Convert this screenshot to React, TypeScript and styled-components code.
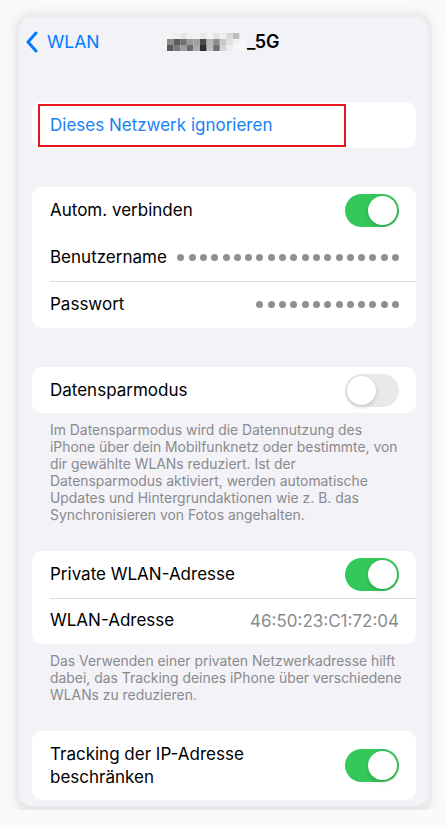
import { createGlobalStyle, styled } from "styled-components";

const GlobalStyle = createGlobalStyle`
  html, body {
    margin: 0;
    padding: 0;
    background: #fafafa;
  }
  body {
    font-family: Inter, "Liberation Sans", Arial, sans-serif;
    -webkit-font-smoothing: antialiased;
  }
`;

// mosaic that hides the network name
const mosaic = [
  ["#f4f4f4", "#f0f0f0", "#e6e6e6", "#eeeeee", "#f2f2f2", "#eaeaea", "#f1f1f1", "#e4e4e4", "#efefef", "#d8d8d8", "#bdbdbd", "#f3f3f3"],
  ["#8a8a8a", "#5c5c5c", "#707070", "#9a9a9a", "#a0a0a0", "#4a4a4a", "#b6b6b6", "#8e8e8e", "#c8c8c8", "#e0e0e0", "#f0f0f0", "#f6f6f6"],
  ["#5a5a5a", "#7a7a7a", "#9c9c9c", "#6c6c6c", "#aaaaaa", "#2e2e2e", "#bcbcbc", "#707070", "#d4d4d4", "#ececec", "#f6f6f6", "#f8f8f8"],
];

const Mosaic = () => (
  <svg width="80" height="18" viewBox="0 0 80 18">
    {mosaic.map((row, r) =>
      row.map((c, i) => (
        <rect key={`${r}-${i}`} x={i * 6.6} y={r * 6} width="6.6" height="6" fill={c} />
      ))
    )}
  </svg>
);

const Chevron = () => (
  <svg width="14" height="22" viewBox="0 0 14 22">
    <path
      d="M11 2 L3 11 L11 20"
      fill="none"
      stroke="#007aff"
      strokeWidth="3"
      strokeLinecap="round"
      strokeLinejoin="round"
    />
  </svg>
);

const Dots = ({ count }: { count: number }) => (
  <DotRow>
    {[...Array(count)].map((_, i) => (
      <Dot key={i} />
    ))}
  </DotRow>
);

function App() {
  return (
    <>
      <GlobalStyle />
      <Frame>
        <NavBar>
          <BackButton>
            <Chevron />
            <span>WLAN</span>
          </BackButton>
          <NavTitle>
            <Mosaic />
            <span>_5G</span>
          </NavTitle>
        </NavBar>

        <Content>
          <Card $mt={37}>
            <Row>
              <ActionLabel>Dieses Netzwerk ignorieren</ActionLabel>
            </Row>
            <Highlight />
          </Card>

          <Card $mt={39}>
            <Row $h={47}>
              <Label>Autom. verbinden</Label>
              <Toggle $on />
            </Row>
            <Row $h={47}>
              <Label>Benutzername</Label>
              <Dots count={20} />
            </Row>
            <Row $h={47} $divider>
              <Label>Passwort</Label>
              <Dots count={13} />
            </Row>
          </Card>

          <Card $mt={39}>
            <Row>
              <Label>Datensparmodus</Label>
              <Toggle />
            </Row>
          </Card>
          <Footnote>
            Im Datensparmodus wird die Datennutzung des
            <br />
            iPhone über dein Mobilfunknetz oder bestimmte, von
            <br />
            dir gewählte WLANs reduziert. Ist der
            <br />
            Datensparmodus aktiviert, werden automatische
            <br />
            Updates und Hintergrundaktionen wie z. B. das
            <br />
            Synchronisieren von Fotos angehalten.
          </Footnote>

          <Card $mt={27}>
            <Row $h={46.5}>
              <Label>Private WLAN-Adresse</Label>
              <Toggle $on />
            </Row>
            <Row $h={46.5} $divider>
              <Label>WLAN-Adresse</Label>
              <Value>46:50:23:C1:72:04</Value>
            </Row>
          </Card>
          <Footnote>
            Das Verwenden einer privaten Netzwerkadresse hilft
            <br />
            dabei, das Tracking deines iPhone über verschiedene
            <br />
            WLANs zu reduzieren.
          </Footnote>

          <Card $mt={27}>
            <Row $h={69}>
              <Label>
                Tracking der IP-Adresse
                <br />
                beschränken
              </Label>
              <Toggle $on />
            </Row>
          </Card>
        </Content>
      </Frame>
    </>
  );
}

export default App;

const Frame = styled.div`
  margin: 17px 19px 0 19px;
  height: 793px;
  border-radius: 14px;
  background: #f2f2f7;
  overflow: hidden;
  box-shadow: 0 0 0 4px #ececec, 0 0 8px 6px #ededed;
  border-bottom: 4px solid #e7e7eb;
  box-sizing: border-box;
`;

const NavBar = styled.div`
  position: relative;
  display: flex;
  align-items: center;
  height: 48px;
  padding-left: 6px;
  box-sizing: border-box;
`;

const BackButton = styled.div`
  display: flex;
  align-items: center;
  gap: 8px;
  color: #007aff;
  font-size: 17.5px;
  padding-top: 1px;
`;

const NavTitle = styled.div`
  position: absolute;
  left: 148px;
  top: 14px;
  display: flex;
  align-items: center;
  font-size: 18px;
  font-weight: 600;
  color: #000;
`;

const Content = styled.div`
  display: flex;
  flex-direction: column;
  padding: 0 12px 0 13px;
`;

const Card = styled.div<{ $mt: number }>`
  position: relative;
  margin-top: ${({ $mt }) => $mt}px;
  background: #fff;
  border-radius: 10px;
`;

const Row = styled.div<{ $h?: number; $divider?: boolean }>`
  position: relative;
  display: flex;
  align-items: center;
  justify-content: space-between;
  height: ${({ $h }) => $h ?? 46}px;
  padding: 0 17px 0 18px;

  ${({ $divider }) =>
    $divider &&
    `
    &::before {
      content: "";
      position: absolute;
      top: 0;
      left: 18px;
      right: 0;
      height: 1px;
      background: #dcdce0;
    }
  `}
`;

const Label = styled.div`
  font-size: 17px;
  line-height: 23px;
  color: #000;
`;

const ActionLabel = styled.div`
  font-size: 17px;
  color: #1a7ff5;
`;

const Value = styled.div`
  font-size: 17px;
  color: #8a8a8e;
`;

const Highlight = styled.div`
  position: absolute;
  left: 6px;
  top: 2px;
  width: 308px;
  height: 43px;
  border: 2px solid #e5161e;
  box-sizing: border-box;
  pointer-events: none;
`;

const Toggle = styled.div<{ $on?: boolean }>`
  position: relative;
  flex-shrink: 0;
  width: 54px;
  height: 33px;
  border-radius: 17px;
  background: ${({ $on }) => ($on ? "#34c759" : "#e9e9eb")};

  &::after {
    content: "";
    position: absolute;
    top: 2px;
    left: ${({ $on }) => ($on ? "23px" : "2px")};
    width: 29px;
    height: 29px;
    border-radius: 50%;
    background: #fff;
    box-shadow: 0 2px 4px rgba(0, 0, 0, 0.15), 0 0 1px rgba(0, 0, 0, 0.1);
  }
`;

const DotRow = styled.div`
  display: flex;
  gap: 4.3px;
`;

const Dot = styled.span`
  width: 7px;
  height: 7px;
  border-radius: 50%;
  background: #8e8e93;
`;

const Footnote = styled.p`
  margin: 9px 0 0 0;
  padding: 0 0 0 18px;
  font-size: 13.9px;
  line-height: 17px;
  color: #8a8a8e;
  white-space: nowrap;
`;
